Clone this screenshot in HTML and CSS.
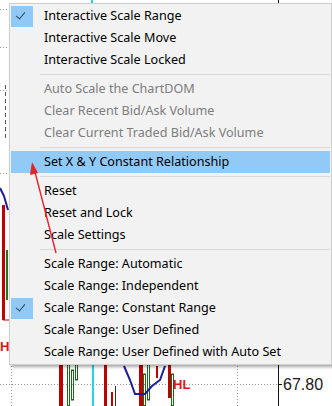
FILE: index.html
```html
<!DOCTYPE html>
<html>
<head>
  <meta charset="UTF-8">
  <title>Scale Menu</title>
  <link rel="stylesheet" href="styles.css">
</head>
<body>
  <div class="chart">
    <!-- Grafico de fondo -->
    <svg class="chart-bg" width="332" height="406" viewBox="0 0 332 406">
      <g stroke="#9a9a9a" stroke-dasharray="1 2" stroke-width="1">
        <line x1="0" y1="9.5" x2="9" y2="9.5"/>
        <line x1="0" y1="47.5" x2="9" y2="47.5"/>
        <line x1="0" y1="90.5" x2="9" y2="90.5"/>
        <line x1="0" y1="173.5" x2="9" y2="173.5"/>
        <line x1="0" y1="384.5" x2="278" y2="384.5"/>
        <line x1="11.5" y1="360" x2="11.5" y2="406"/>
        <line x1="237.5" y1="360" x2="237.5" y2="406"/>
      </g>
      <line x1="5.5" y1="85" x2="5.5" y2="140" stroke="#555" stroke-dasharray="4 3"/>
      <polyline points="0,188 4,196 8,210" fill="none" stroke="#1c1c9c" stroke-width="2"/>
      <rect x="2" y="205" width="3" height="115" fill="#c00000"/>
      <rect x="6" y="250" width="2" height="50" fill="#1a7a1a"/>
      <line x1="9" y1="320" x2="3" y2="320" stroke="#c00000"/>
      <text x="0" y="351" class="hl">HI</text>
      <!-- parte inferior -->
      <rect x="59" y="360" width="4" height="46" fill="#c00000"/>
      <g fill="none" stroke="#1a6a1a" stroke-width="1">
        <rect x="67.5" y="360" width="2" height="46"/>
        <rect x="71.5" y="370" width="2" height="30"/>
        <rect x="75.5" y="360" width="2" height="20"/>
        <rect x="143.5" y="374" width="2" height="32"/>
        <rect x="147.5" y="360" width="2" height="40"/>
        <rect x="171.5" y="374" width="2" height="32"/>
      </g>
      <rect x="92" y="360" width="2" height="46" fill="#27d3e6"/>
      <rect x="104" y="360" width="3" height="46" fill="#c00000"/>
      <rect x="111" y="392" width="2" height="14" fill="#c00000"/>
      <rect x="115" y="386" width="1" height="20" fill="#333"/>
      <rect x="139" y="360" width="4" height="46" fill="#c00000"/>
      <rect x="168" y="360" width="3" height="38" fill="#c00000"/>
      <rect x="156" y="366" width="2" height="12" fill="#c00000"/>
      <polyline points="124,366 130,380 135,394 145,394 152,386 160,380 165,366" fill="none" stroke="#1c1c9c" stroke-width="2"/>
      <text x="173" y="389" class="hl">HL</text>
      <line x1="278.5" y1="0" x2="278.5" y2="406" stroke="#111"/>
      <line x1="278" y1="384.5" x2="282" y2="384.5" stroke="#111"/>
      <rect x="91" y="0" width="2" height="3" fill="#27d3e6"/>
      <text x="283" y="390" class="price">67.80</text>
    </svg>

    <!-- Menu contextual -->
    <ul class="menu">
      <li class="item checked"><span class="check"></span>Interactive Scale Range</li>
      <li class="item">Interactive Scale Move</li>
      <li class="item">Interactive Scale Locked</li>
      <li class="sep"></li>
      <li class="item disabled">Auto Scale the ChartDOM</li>
      <li class="item disabled">Clear Recent Bid/Ask Volume</li>
      <li class="item disabled">Clear Current Traded Bid/Ask Volume</li>
      <li class="sep"></li>
      <li class="item active">Set X &amp; Y Constant Relationship</li>
      <li class="sep"></li>
      <li class="item">Reset</li>
      <li class="item">Reset and Lock</li>
      <li class="item">Scale Settings</li>
      <li class="sep"></li>
      <li class="item">Scale Range: Automatic</li>
      <li class="item">Scale Range: Independent</li>
      <li class="item checked"><span class="check"></span>Scale Range: Constant Range</li>
      <li class="item">Scale Range: User Defined</li>
      <li class="item">Scale Range: User Defined with Auto Set</li>
    </ul>

    <!-- Flecha roja -->
    <svg class="arrow" width="332" height="406" viewBox="0 0 332 406">
      <line x1="56" y1="253" x2="35" y2="172" stroke="#e8222a" stroke-width="1.4"/>
      <polygon points="32,162 30,175 38,173" fill="#e8222a"/>
    </svg>
  </div>
</body>
</html>
```

FILE: styles.css
```css
/* Estilos generales */
body {
  margin: 0;
  padding: 0;
  background: #fff;
  font-family: 'Noto Sans', 'Liberation Sans', sans-serif;
}
.chart {
  position: relative;
  width: 332px;
  height: 406px;
  overflow: hidden;
}
.chart-bg {
  display: block;
}
.hl {
  font-family: 'Liberation Sans', sans-serif;
  font-weight: bold;
  font-size: 13px;
  fill: #e01818;
}
.price {
  font-family: 'Liberation Sans', sans-serif;
  font-size: 16px;
  fill: #1a1a1a;
}
/* Menu */
.menu {
  position: absolute;
  left: 9px;
  top: 3px;
  width: 319px;
  margin: 0;
  padding: 1px 1px;
  list-style: none;
  background: #f2f2f2;
  border: 1px solid #cfcfcf;
  box-shadow: 2px 2px 3px rgba(0,0,0,0.35);
}
.item {
  position: relative;
  height: 22px;
  line-height: 22px;
  padding-left: 33px;
  font-size: 12.6px;
  color: #000;
  white-space: nowrap;
}
.item.disabled {
  color: #7d7d7d;
}
.item.active {
  background: #91c9f7;
}
.check {
  position: absolute;
  left: 0;
  top: 1px;
  width: 22px;
  height: 21px;
  background: #90c8f6;
}
.check::after {
  content: '';
  position: absolute;
  left: 7px;
  top: 4px;
  width: 4px;
  height: 8px;
  border: solid #2b4563;
  border-width: 0 1.5px 1.5px 0;
  transform: rotate(40deg);
}
.sep {
  height: 7px;
  position: relative;
}
.sep::after {
  content: '';
  position: absolute;
  left: 29px;
  right: 0;
  top: 3px;
  height: 1px;
  background: #d7d7d7;
}
.arrow {
  position: absolute;
  left: 0;
  top: 0;
  pointer-events: none;
}
```
